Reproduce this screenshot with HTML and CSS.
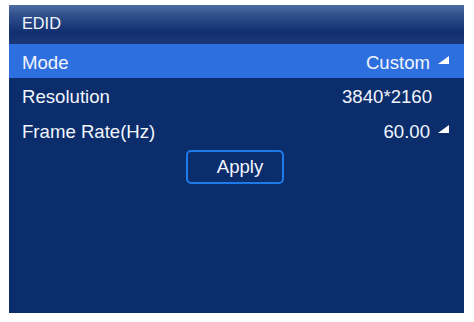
FILE: index.html
```html
<!DOCTYPE html>
<html>
<head>
<meta charset="utf-8">
<link rel="stylesheet" href="styles.css">
</head>
<body>
<div class="panel">
  <div class="header">EDID</div>
  <div class="row row-active">
    <span class="label">Mode</span>
    <span class="value">Custom<svg class="tri" width="11" height="8" viewBox="0 0 11 8"><polygon points="11,0 11,8 0,8" fill="#ffffff"/></svg></span>
  </div>
  <div class="row">
    <span class="label">Resolution</span>
    <span class="value value-plain">3840*2160</span>
  </div>
  <div class="row">
    <span class="label">Frame Rate(Hz)</span>
    <span class="value">60.00<svg class="tri" width="11" height="8" viewBox="0 0 11 8"><polygon points="11,0 11,8 0,8" fill="#ffffff"/></svg></span>
  </div>
  <div class="actions">
    <div class="btn">Apply</div>
  </div>
</div>
</body>
</html>
```

FILE: styles.css
```css
html, body {
  margin: 0;
  padding: 0;
  background: #ffffff;
}
body {
  font-family: "Liberation Sans", Arial, sans-serif;
  color: #f2f5fb;
}
.panel {
  margin: 5px 0 0 9px;
  width: 455px;
  height: 308px;
  background: #0b2d6b;
  display: flex;
  flex-direction: column;
}
.header {
  height: 39px;
  box-sizing: border-box;
  padding: 0 0 2px 13px;
  line-height: 37px;
  font-size: 16.3px;
  background: linear-gradient(to bottom, #4d6da4 0%, #2c4c8a 30%, #112f6f 70%, #1a3877 100%);
}
.row {
  height: 34px;
  box-sizing: border-box;
  padding: 4px 15px 0 13px;
  line-height: 30px;
  font-size: 18.6px;
  display: flex;
  justify-content: space-between;
  align-items: baseline;
}
.row-active {
  background: #2e6fdf;
}
.row + .row:not(.row-active) {
  height: 34.5px;
}
.value {
  display: flex;
  align-items: baseline;
}
.value-plain {
  margin-right: 17px;
}
.tri {
  margin-left: 8px;
  position: relative;
  top: -5px;
}
.actions {
  display: flex;
  justify-content: center;
  padding-top: 3px;
  padding-right: 3px;
}
.btn {
  width: 98px;
  height: 34px;
  box-sizing: border-box;
  border: 2px solid #1f7ae9;
  border-radius: 5px;
  font-size: 18.6px;
  line-height: 30px;
  text-align: center;
  padding-left: 10px;
}
```
